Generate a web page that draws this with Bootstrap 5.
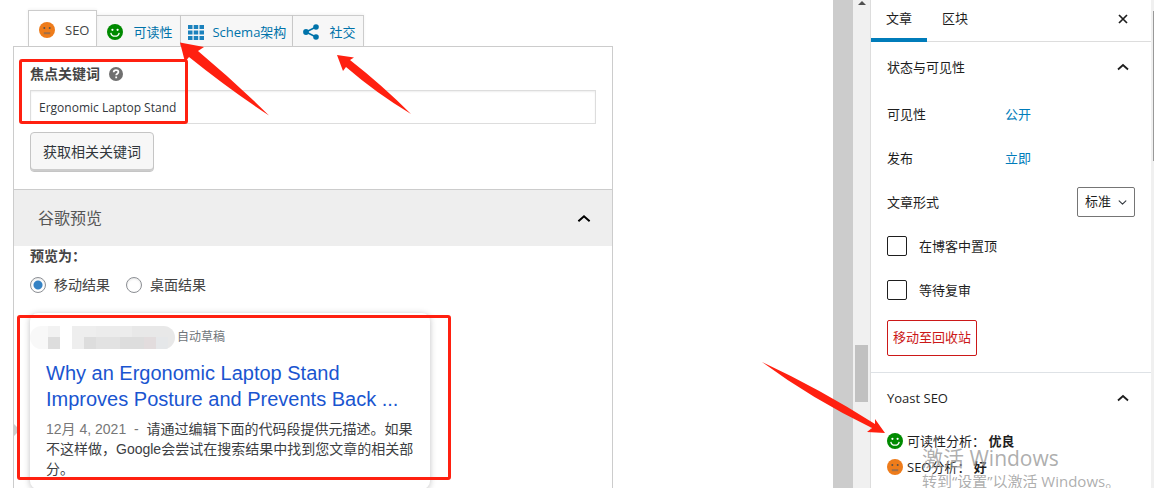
<!DOCTYPE html>
<html lang="zh-CN">
<head>
<meta charset="utf-8">
<meta name="viewport" content="width=device-width, initial-scale=1">
<title>编辑文章</title>
<link href="https://cdn.jsdelivr.net/npm/bootstrap@5.3.0/dist/css/bootstrap.min.css" rel="stylesheet">
<style>
  :root { --ui: "Open Sans", "Noto Sans CJK SC", sans-serif; --line: #ccc; --red: #ff2010; --wp: #007cba; }
  body { font-family: var(--ui); font-size: 13px; line-height: 20px; color: #1e1e1e; }
  a { color: #0073aa; text-decoration: none; }
  svg { flex: none; display: block; }

  /* editor area */
  .editor { min-width: 0; padding: 11px 13px 0; }
  .seo-box { max-width: 600px; }
  .seo-tabs { padding-left: 15px; border: 0; height: 35px; }
  .seo-tabs .nav-link { gap: 10px; border: 1px solid var(--line); border-left-width: 0; border-bottom: 0; border-radius: 0; margin: 0; height: 31px; padding: 2px 8px 0 10px; background: #f7f7f7; color: #0073aa; box-shadow: 0 -1px 3px #0000000d; white-space: nowrap; }
  .seo-tabs .nav-link.active { border-left-width: 1px; height: 36px; padding: 2px 7px 0 10px; background: #fff; color: #444; border-color: var(--line); position: relative; z-index: 1; }
  .seo-tabs .nav-link.tab-tight { gap: 8px; padding: 2px 6px 0 7px; }
  .seo-panel { border: 1px solid var(--line); }
  .seo-section { padding: 17px 16px; }
  .strong-label { font-size: 14px; font-weight: 700; color: #444; }
  .key-input { height: 34px; margin-top: 6px; padding: 0 8px; font-size: 12px; border: 1px solid #ddd; border-radius: 0; color: #32373c; box-shadow: inset 0 1px 2px #00000012; }
  .key-btn { height: 40px; padding: 0 12px 2px; font-size: 14px; border: 1px solid #c5c5c5; border-radius: 4px; background: #f7f7f7; box-shadow: inset 0 -2px 0 #ccc; color: #32373c; }
  .section-head { height: 57px; padding: 0 21px 0 24px; border: 0; border-top: 1px solid var(--line); background: #eee; color: #555; font-size: 16px; }
  .preview { padding: 0 16px; font-size: 14px; color: #444; }
  .modes { margin-top: 9px; }
  .preview .form-check-input { width: 16px; height: 16px; margin: 0; border-color: #8c8f94; box-shadow: inset 0 1px 2px #0000001a; }
  .preview .form-check-input:checked { background: radial-gradient(circle, #3582c4 4px, #fff 5px); }
  .snippet { width: 400px; max-width: 100%; height: 176px; margin-top: 18px; padding: 12px 14px 8px 16px; border-radius: 8px; box-shadow: 0 1px 6px #20212447; }
  .snippet-url { height: 24px; gap: 2px; margin-left: -16px; font-size: 12px; color: #70757a; }
  .masked { width: 145px; height: 23px; border-radius: 12px; overflow: hidden; background: linear-gradient(90deg, #f8f8f8 18px, #f2f2f2 18px 30px, #fff 30px 42px, #eee 42px 66px, #ececec 66px 102px, #e8e8e8 102px); }
  .masked-row { height: 12px; margin-top: 11px; background: linear-gradient(90deg, transparent 18px, #ddd 18px 30px, transparent 30px 54px, #ddd 54px 66px, #e2e2e2 66px 90px, #ddd 90px 114px, #e2dcdd 114px 126px, #e5e7e9 126px 138px, transparent 138px); }
  .snippet-title { margin: 11px 0 7px; font: 20px/26px "Liberation Sans", sans-serif; color: #1a55d0; }
  .snippet-text { margin: 0; font: 14px/20px "Liberation Sans", "Noto Sans CJK SC", sans-serif; color: #3c4043; }
  .snippet-text time { color: #777; }

  /* scroll tracks */
  .gutter { flex: 0 0 20px; background: #ccc; }
  .track { flex: 0 0 17px; background: #f0f0f0; }
  .thumb { width: 13px; height: 57px; margin: 337px auto 0; background: #c1c1c1; }
  .edge { flex: 0 0 3px; background: #f0f0f0; }
  .edge-thumb { width: 1px; height: 150px; margin: 11px 0 0 auto; background: #999; }

  /* settings sidebar */
  .settings { flex: 0 0 281px; border-left: 1px solid #ddd; }
  .side-tabs { height: 42px; border-bottom: 1px solid #ddd; padding-right: 23px; }
  .side-tabs .nav-link { padding: 0 15px 5px; height: 42px; color: #1e1e1e; }
  .side-tabs .nav-link.active { border-bottom: 4px solid var(--wp); padding-bottom: 1px; }
  .plain-btn { border: 0; padding: 0; background: none; color: inherit; }
  .side-head { height: 50px; padding: 0 22px 0 16px; }
  .side-row { height: 44px; padding: 0 16px; }
  .side-row a { color: var(--wp); width: 130px; }
  .side-row .form-check-input { width: 20px; height: 20px; margin: 0; border: 1px solid #1e1e1e; border-radius: 2px; }
  .format-select { width: 58px; height: 30px; padding: 0 7px; font-size: 13px; border: 1px solid #757575; border-radius: 2px; color: #1e1e1e; background-position: right 7px center; background-size: 9px; }
  .trash { height: 36px; margin: 8px 16px 16px; padding: 0 5px; font-size: 13px; border: 1px solid #cc1818; border-radius: 2px; color: #cc1818; }
  .scores { margin: 5px 16px 0; }
  .scores li { height: 26px; gap: 4px; }
  .watermark { right: 24px; bottom: 0; width: 205px; color: #999c; pointer-events: none; white-space: nowrap; font-size: 15px; line-height: 14px; }
  .watermark div { font-size: 21px; line-height: 26px; margin-bottom: 3px; }

  /* red annotations */
  .mark-box { border: 3px solid var(--red); border-radius: 3px; pointer-events: none; z-index: 3; }
  .mark-key { left: 19px; top: 59px; width: 169px; height: 65px; }
  .mark-snippet { left: 17px; top: 315px; width: 434px; height: 165px; }
  .mark-arrows { left: 0; top: 0; z-index: 3; pointer-events: none; fill: var(--red); }
  .mark-arrow-side { left: -111px; top: 360px; z-index: 3; pointer-events: none; fill: var(--red); }
  .handle { left: 13px; top: 423px; }
</style>
</head>
<body>
<svg class="d-none">
  <symbol id="good" viewBox="0 0 16 16"><circle cx="8" cy="8" r="8" fill="#008a00"/><circle cx="5.4" cy="5.8" r="1.1" fill="#fff"/><circle cx="10.6" cy="5.8" r="1.1" fill="#fff"/><path d="M3.8 8.8a4.3 4.3 0 0 0 8.4 0" fill="none" stroke="#fff" stroke-width="1.3"/></symbol>
  <symbol id="okay" viewBox="0 0 16 16"><circle cx="8" cy="8" r="8" fill="#ee7c1b"/><circle cx="5.3" cy="6" r="1" fill="#5b5148"/><circle cx="10.7" cy="6" r="1" fill="#5b5148"/><path d="M4.8 10.2h6.4v2H4.8z" fill="#a06f49"/></symbol>
  <symbol id="up" viewBox="0 0 12 8"><path d="M1 6.500 6 2l5 4.500" fill="none" stroke="currentColor" stroke-width="1.800"/></symbol>
</svg>
<div class="d-flex vh-100 overflow-hidden position-relative">
  <main class="editor flex-grow-1 position-relative">
    <div class="seo-box">
      <ul class="nav nav-tabs seo-tabs flex-nowrap align-items-end">
        <li><a class="nav-link active d-flex align-items-center" href="#seo"><svg width="16" height="16"><use href="#okay"/></svg>SEO</a></li>
        <li><a class="nav-link d-flex align-items-center" href="#read"><svg width="16" height="16"><use href="#good"/></svg>可读性</a></li>
        <li><a class="nav-link tab-tight d-flex align-items-center" href="#schema"><svg width="16" height="15" viewBox="0 0 16 15" fill="#1c82bd"><path d="M0 0h4.500v4H0zM5.700 0h4.500v4H5.700zM11.500 0H16v4h-4.500zM0 5.500h4.500v4H0zM5.700 5.500h4.500v4H5.700zM11.500 5.500H16v4h-4.500zM0 11h4.500v4H0zM5.700 11h4.500v4H5.700zM11.500 11H16v4h-4.500z"/></svg>Schema架构</a></li>
        <li><a class="nav-link d-flex align-items-center" href="#social"><svg width="16" height="16" viewBox="0 0 16 16"><path d="M13 3 3 8l10 5" fill="none" stroke="#0073aa" stroke-width="1.600"/><g fill="#0073aa"><circle cx="13" cy="3" r="2.800"/><circle cx="3" cy="8" r="2.900"/><circle cx="13" cy="13" r="2.800"/></g></svg>社交</a></li>
      </ul>
      <section class="seo-panel">
        <div class="seo-section">
          <div class="d-flex align-items-center">
            <label class="strong-label" for="keyphrase">焦点关键词</label>
            <svg class="ms-2" width="16" height="16" viewBox="0 0 16 16"><circle cx="8" cy="8" r="7" fill="#707070"/><path d="M5.700 6.300c0-3 4.700-2.900 4.700-.2 0 1.700-2.200 1.600-2.200 3.200M8.200 10.500v1.700" fill="none" stroke="#fff" stroke-width="1.800"/></svg>
          </div>
          <input class="form-control key-input" id="keyphrase" type="text" value="Ergonomic Laptop Stand">
          <button class="btn key-btn mt-2" type="button">获取相关关键词</button>
        </div>
        <button class="section-head w-100 d-flex align-items-center justify-content-between" type="button">谷歌预览<svg width="14" height="9" viewBox="0 0 12 8" color="#000"><use href="#up"/></svg></button>
        <div class="preview">
          <div class="strong-label">预览为：</div>
          <div class="modes d-flex gap-3">
            <div class="d-flex align-items-center gap-2"><input class="form-check-input" type="radio" name="mode" id="mobile" checked><label for="mobile">移动结果</label></div>
            <div class="d-flex align-items-center gap-2"><input class="form-check-input" type="radio" name="mode" id="desktop"><label for="desktop">桌面结果</label></div>
          </div>
          <article class="snippet">
            <div class="snippet-url d-flex align-items-center"><div class="masked"><div class="masked-row"></div></div>自动草稿</div>
            <h2 class="snippet-title">Why an Ergonomic Laptop Stand Improves Posture and Prevents Back ...</h2>
            <p class="snippet-text"><time>12月 4, 2021 &nbsp;-&nbsp; </time>请通过编辑下面的代码段提供元描述。如果不这样做，Google会尝试在搜索结果中找到您文章的相关部分。</p>
          </article>
        </div>
      </section>
    </div>
    <svg class="handle position-absolute" width="7" height="14"><path d="M0 0 7 7 0 14z" fill="#ccc"/></svg>
    <div class="mark-box mark-key position-absolute"></div>
    <div class="mark-box mark-snippet position-absolute"></div>
    <svg class="mark-arrows position-absolute" width="420" height="120">
      <path d="M180 42.500 204 47l-6 4q36 30 71 64.500Q230 90 189 57l-4 5z"/>
      <path d="M337 55l17 2.500-4 2.500q32 25 61 54Q376 93 346 67l-3 4z"/>
    </svg>
  </main>
  <div class="gutter"></div>
  <div class="track"><svg class="mx-auto" width="8" height="8"><path d="M0 5 4 1l4 4z" fill="#505050"/></svg><div class="thumb"></div></div>
  <aside class="settings position-relative">
    <div class="side-tabs d-flex align-items-center">
      <nav class="nav flex-grow-1">
        <a class="nav-link active d-flex align-items-center" href="#post">文章</a>
        <a class="nav-link d-flex align-items-center" href="#block">区块</a>
      </nav>
      <button class="plain-btn pb-1" type="button" aria-label="关闭"><svg width="10" height="10" viewBox="0 0 10 10"><path d="m1 1 8 8M9 1 1 9" stroke="#1e1e1e" stroke-width="1.700"/></svg></button>
    </div>
    <button class="plain-btn side-head w-100 d-flex align-items-center justify-content-between" type="button">状态与可见性<svg width="12" height="8"><use href="#up"/></svg></button>
    <div class="side-row d-flex align-items-center justify-content-between"><span>可见性</span><a href="#visibility">公开</a></div>
    <div class="side-row d-flex align-items-center justify-content-between"><span>发布</span><a href="#publish">立即</a></div>
    <div class="side-row d-flex align-items-center justify-content-between"><label for="format">文章形式</label><select class="form-select format-select" id="format"><option>标准</option></select></div>
    <div class="side-row d-flex align-items-center"><input class="form-check-input me-2" type="checkbox" id="sticky"><label class="ps-1" for="sticky">在博客中置顶</label></div>
    <div class="side-row d-flex align-items-center"><input class="form-check-input me-2" type="checkbox" id="pending"><label class="ps-1" for="pending">等待复审</label></div>
    <button class="btn trash" type="button">移动至回收站</button>
    <div class="border-top">
      <button class="plain-btn side-head w-100 d-flex align-items-center justify-content-between" type="button">Yoast SEO<svg width="12" height="8"><use href="#up"/></svg></button>
      <ul class="scores list-unstyled">
        <li class="d-flex align-items-center"><svg width="16" height="16"><use href="#good"/></svg><span>可读性分析： <b>优良</b></span></li>
        <li class="d-flex align-items-center"><svg width="16" height="16"><use href="#okay"/></svg><span>SEO分析： <b>好</b></span></li>
      </ul>
    </div>
    <svg class="mark-arrow-side position-absolute" width="130" height="80"><path d="M2 2Q60 29 115 64v-5l10 14-18-1 5-4Q52 39 2 2z"/></svg>
    <div class="watermark position-absolute"><div>激活 Windows</div>转到“设置”以激活 Windows。</div>
  </aside>
  <div class="edge"><div class="edge-thumb"></div></div>
</div>
<script src="https://cdn.jsdelivr.net/npm/bootstrap@5.3.0/dist/js/bootstrap.bundle.min.js"></script>
</body>
</html>
